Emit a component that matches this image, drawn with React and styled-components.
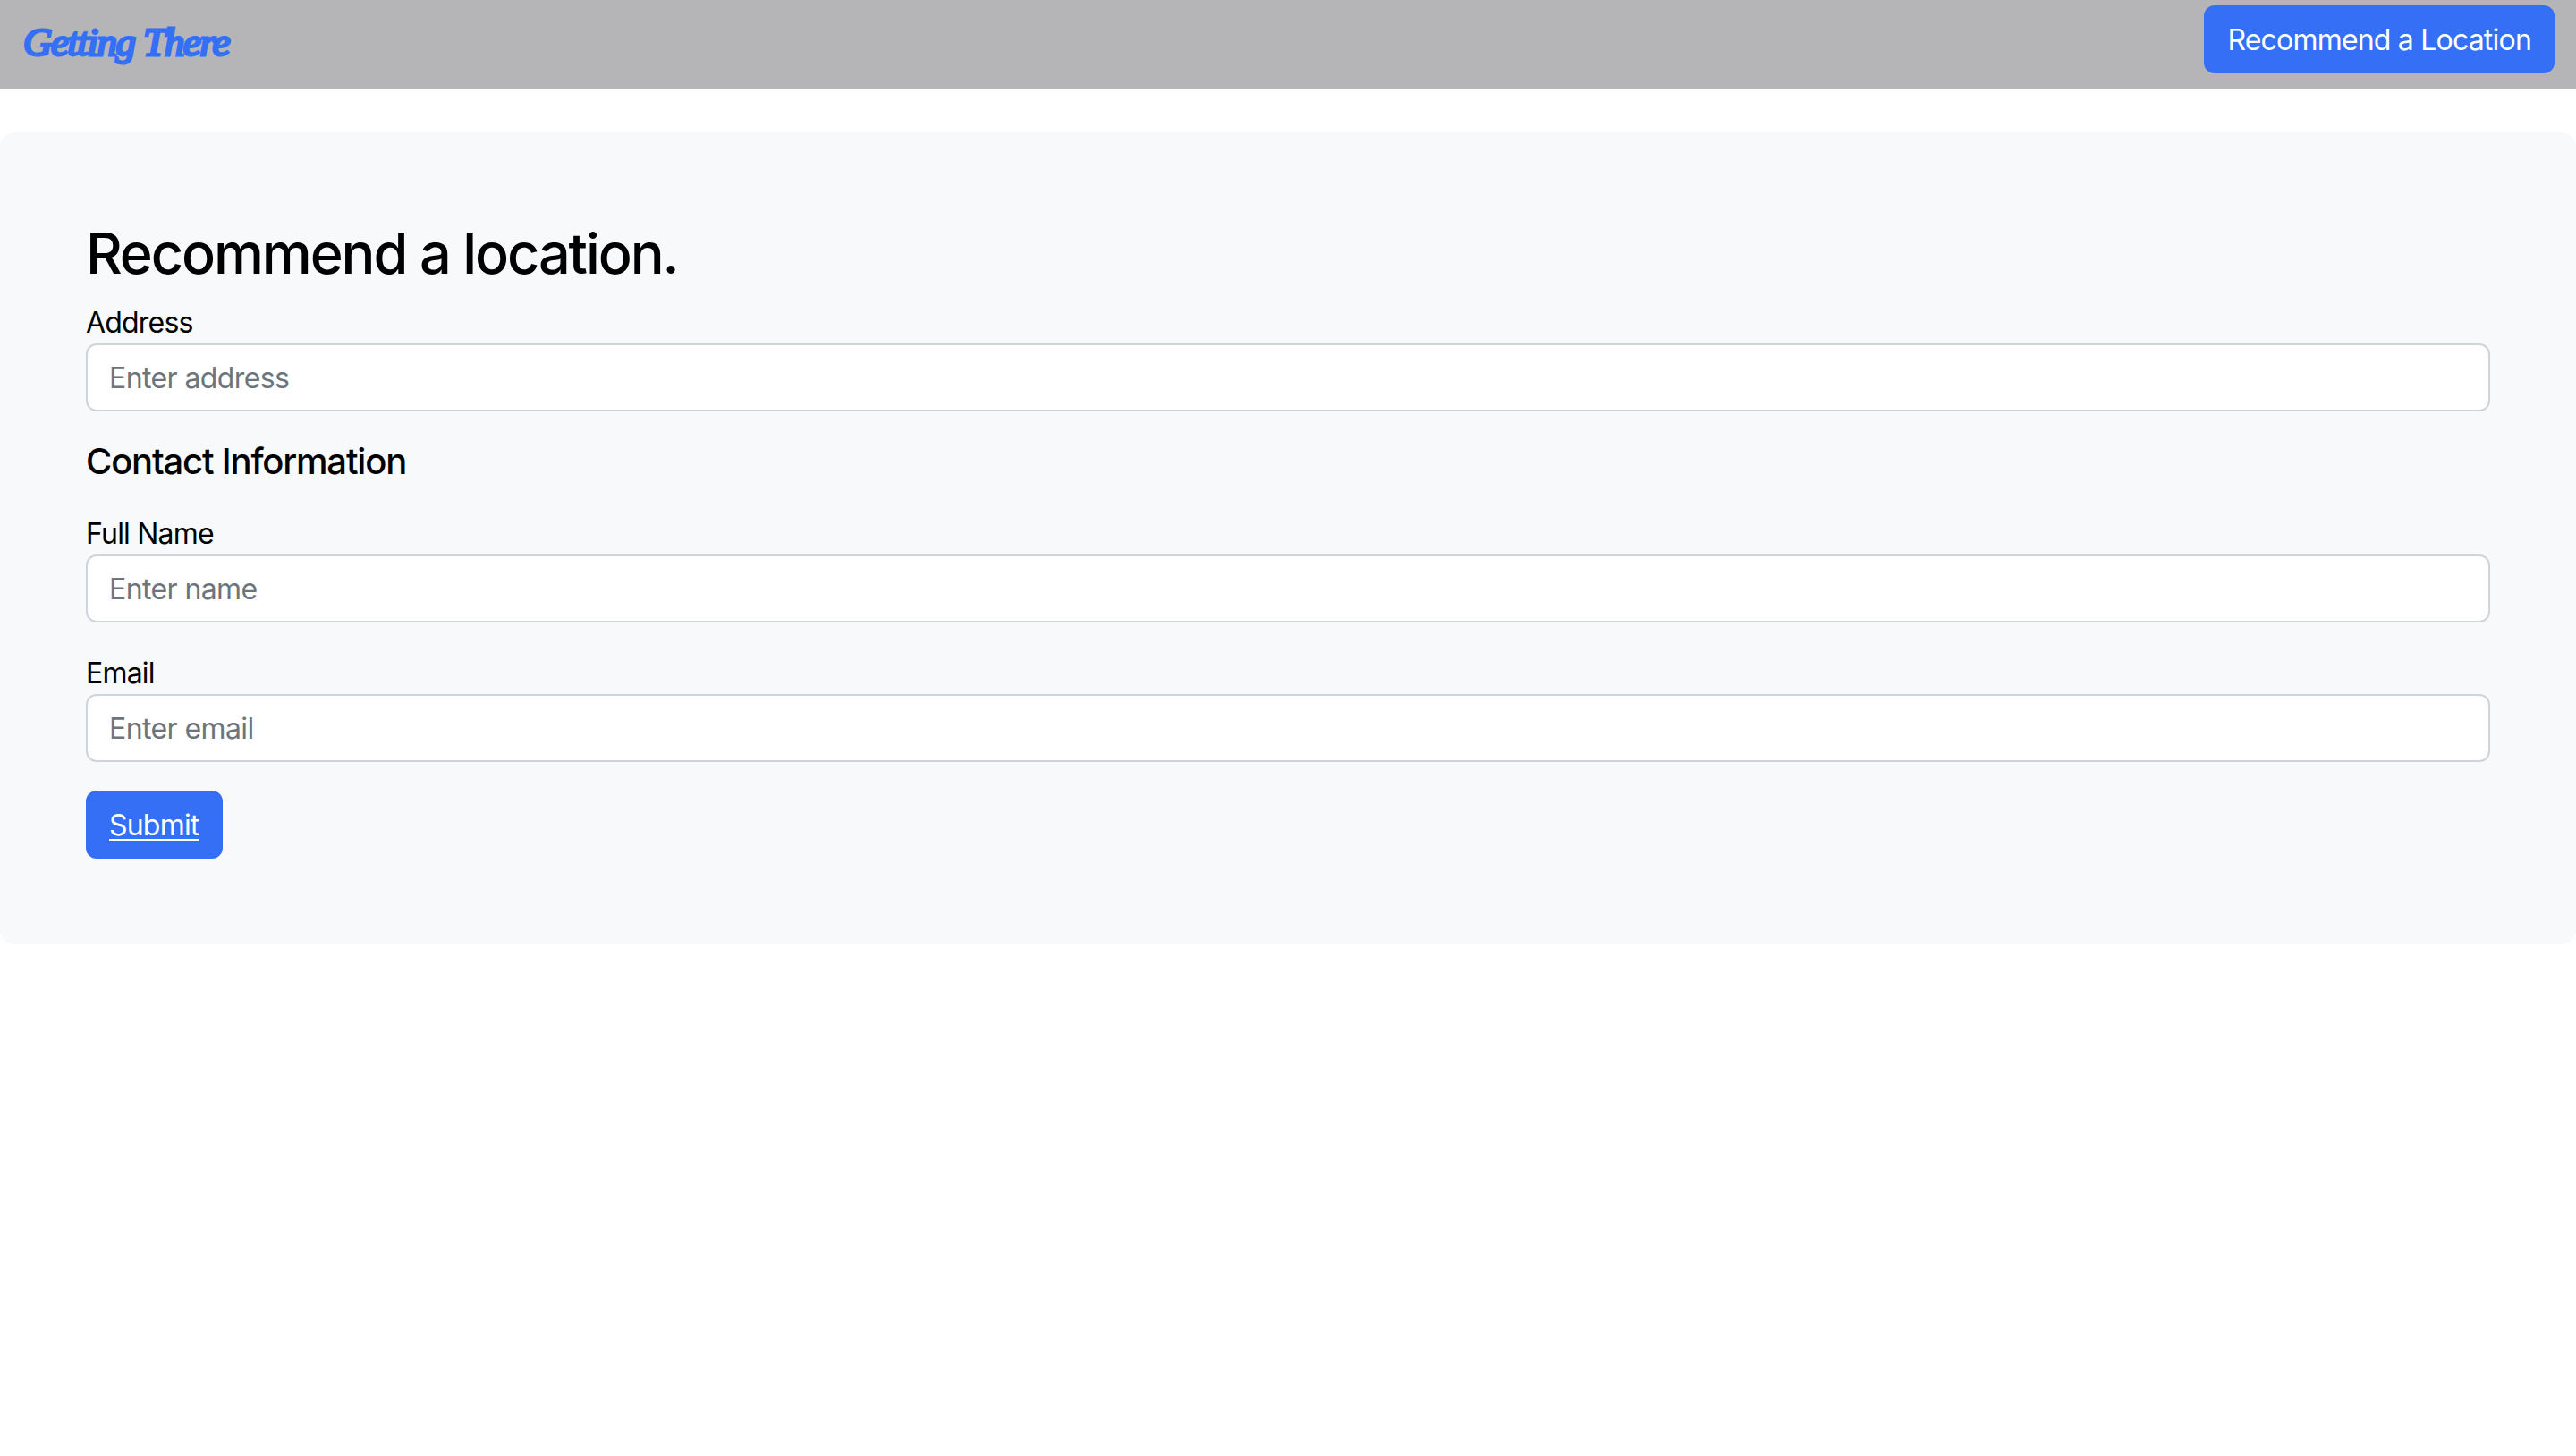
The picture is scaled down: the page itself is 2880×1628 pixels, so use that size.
import styled, { createGlobalStyle } from "styled-components";

const GlobalStyle = createGlobalStyle`
    * {
        box-sizing: border-box;
    }

    body {
        margin: 0;
        background-color: #fff;
        color: #000;
        font-family: Inter, "Liberation Sans", sans-serif;
        font-size: 32px;
        line-height: 48px;
    }
`

const Navbar = styled.nav`
    display: flex;
    align-items: center;
    justify-content: space-between;
    height: 99px;
    padding: 0 24px 11px 26px;
    background-color: #b5b5b7;
`

const Logo = styled.a`
    margin-top: 6px;
    font-family: "Liberation Serif", serif;
    font-style: italic;
    font-size: 45px;
    line-height: 56px;
    letter-spacing: -1.5px;
    color: #346ff6;
    -webkit-text-stroke: 3px #346ff6;
`

const Button = styled.a`
    display: inline-block;
    align-self: ${(props) => (props.$start ? "flex-start" : "auto")};
    padding: 13px 24px 11px;
    border: 2px solid #346ff6;
    border-radius: 12px;
    background-color: #346ff6;
    color: #fff;
    letter-spacing: -0.8px;
    text-decoration: ${(props) => (props.$underline ? "underline" : "none")};
    text-underline-offset: 4px;
    text-decoration-thickness: 2px;
`

const Card = styled.main`
    margin-top: 49px;
    padding: 96px;
    border-radius: 16px;
    background-color: #f8f9fa;
`

const Form = styled.form`
    display: flex;
    flex-direction: column;
`

const Title = styled.h2`
    margin: 0 0 14px;
    font-size: 63px;
    font-weight: 550;
    line-height: 78px;
    letter-spacing: -2.1px;
`

const SubTitle = styled.h4`
    margin: 0 0 32px;
    font-size: 40px;
    font-weight: 550;
    line-height: 48px;
    letter-spacing: -1.2px;
`

const Field = styled.div`
    display: flex;
    flex-direction: column;
    margin-bottom: 32px;
`

const Label = styled.label`
    padding-top: 2px;
    line-height: 46px;
    letter-spacing: -0.8px;
`

const Input = styled.input`
    width: 100%;
    height: 76px;
    padding: 12px 24px;
    border: 2px solid #ced4da;
    border-radius: 12px;
    background-color: #fff;
    color: #212529;
    font-family: inherit;
    font-size: 32px;
    letter-spacing: -0.6px;

    &::placeholder {
        color: #6c757d;
        opacity: 1;
    }
`

export default function App() {
    return (
        <>
            <GlobalStyle />
            <Navbar>
                <Logo>Getting There</Logo>
                <Button>Recommend a Location</Button>
            </Navbar>
            <Card>
                <Form>
                    <Title>Recommend a location.</Title>
                    <Field>
                        <Label>Address</Label>
                        <Input placeholder="Enter address" />
                    </Field>
                    <SubTitle>Contact Information</SubTitle>
                    <Field>
                        <Label>Full Name</Label>
                        <Input placeholder="Enter name" />
                    </Field>
                    <Field>
                        <Label>Email</Label>
                        <Input placeholder="Enter email" />
                    </Field>
                    <Button $start $underline>Submit</Button>
                </Form>
            </Card>
        </>
    )
}
